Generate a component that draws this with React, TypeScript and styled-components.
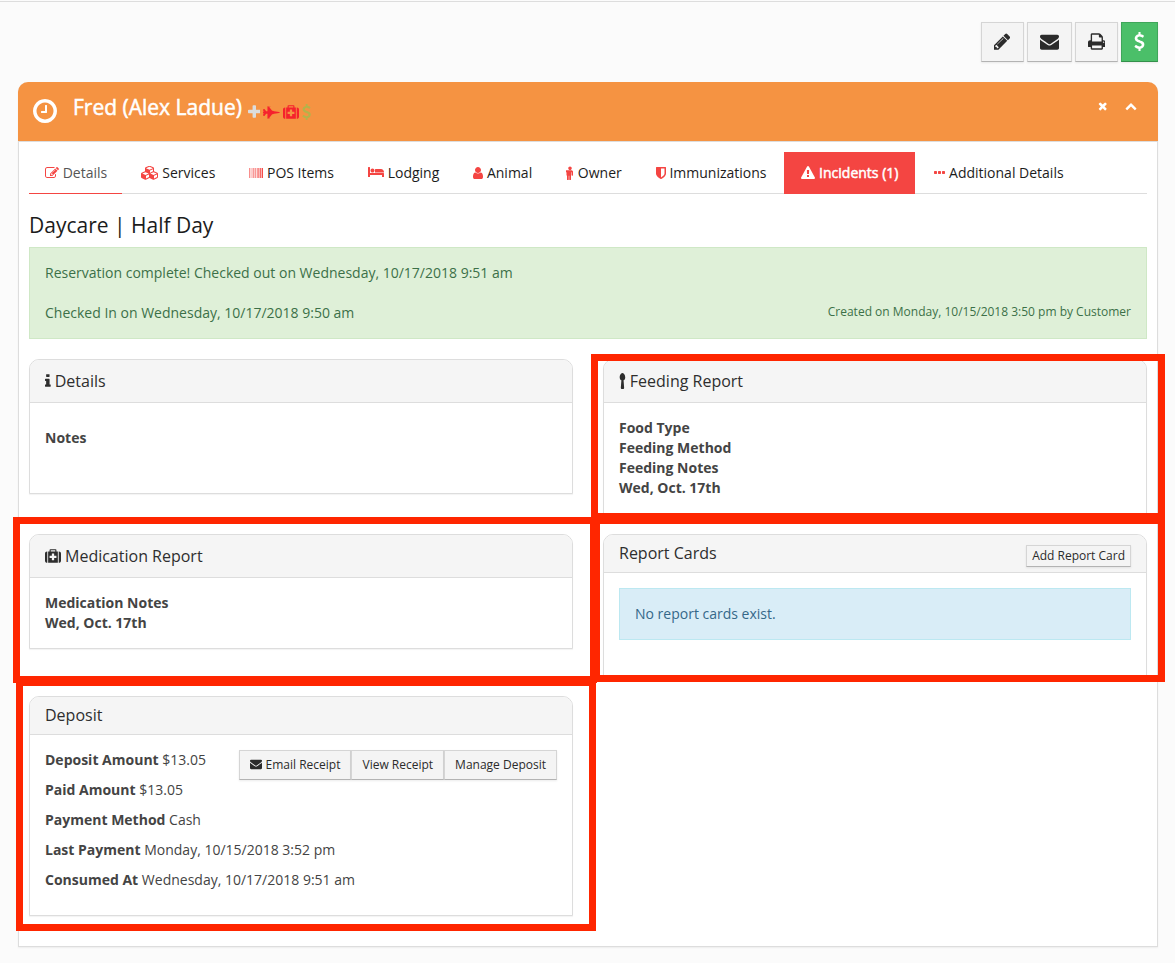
import React from "react";
import styled, { createGlobalStyle, css } from "styled-components";
import { FaFighterJet } from "react-icons/fa";

const GlobalStyle = createGlobalStyle`
  *, *::before, *::after { box-sizing: border-box; }
  body {
    margin: 0;
    background: #fbfbfb;
    color: #444;
    font: 14px/20px "Open Sans", "Noto Sans", sans-serif;
  }
  h1, h2, h3, p, ul, dl, dd { margin: 0; padding: 0; }
  button { font-family: inherit; cursor: pointer; }
`;

/* Each glyph: left edge and advance width in a 1792-unit em, then its outline. */
type Glyph = { x: number; w: number; d: string };

const glyphs = {
  pencil: { x: 128, w: 1536, d: "M491 1536l91-91-235-235-91 91v107h128v128h107zm523-928q0-22-22-22-10 0-17 7l-542 542q-7 7-7 17 0 22 22 22 10 0 17-7l542-542q7-7 7-17zm-54-192l416 416-832 832h-416v-416zm683 96q0 53-37 90l-166 166-416-416 166-165q36-38 90-38 53 0 91 38l235 234q37 39 37 91z" },
  envelope: { x: 0, w: 1792, d: "M1792 710v794q0 66-47 113t-113 47h-1472q-66 0-113-47t-47-113v-794q44 49 101 87 362 246 497 345 57 42 92.5 65.5t94.5 48 110 24.5h2q51 0 110-24.5t94.5-48 92.5-65.5q170-123 498-345 57-39 100-87zm0-294q0 79-49 151t-122 123q-376 261-468 325-10 7-42.5 31t-54 38.5-52 32.5-57.5 27-50 9h-2q-23 0-50-9t-57.5-27-52-32.5-54-38.5-42.5-31q-91-64-262-182.5t-205-142.5q-62-42-117-115.5t-55-136.5q0-78 41.5-130t118.5-52h1472q65 0 112.5 47t47.5 113z" },
  print: { x: 64, w: 1664, d: "M448 1536h896v-256h-896v256zm0-640h896v-384h-160q-40 0-68-28t-28-68v-160h-640v640zm1152 64q0-26-19-45t-45-19-45 19-19 45 19 45 45 19 45-19 19-45zm128 0v416q0 13-9.5 22.5t-22.5 9.5h-224v160q0 40-28 68t-68 28h-960q-40 0-68-28t-28-68v-160h-224q-13 0-22.5-9.5t-9.5-22.5v-416q0-79 56.5-135.5t135.5-56.5h64v-544q0-40 28-68t68-28h672q40 0 88 20t76 48l152 152q28 28 48 76t20 88v256h64q79 0 135.5 56.5t56.5 135.5z" },
  dollar: { x: 384, w: 1024, d: "M1362 1185q0 153-99.5 263.5t-258.5 136.5v175q0 14-9 23t-23 9h-135q-13 0-22.5-9.5t-9.5-22.5v-175q-66-9-127.5-31t-101.5-44.5-74-48-46.5-37.5-17.5-18q-17-21-2-41l103-135q7-10 23-12 15-2 24 9l2 2q113 99 243 125 37 8 74 8 81 0 142.5-43t61.5-122q0-28-15-53t-33.5-42-58.5-37.5-66-32-80-32.5q-39-16-61.5-25t-61.5-26.5-62.5-31-56.5-35.5-53.5-42.5-43.5-49-35.5-58-21-66.5-8.5-78q0-138 98-242t255-134v-180q0-13 9.5-22.5t22.5-9.5h135q14 0 23 9t9 23v176q57 6 110.5 23t87 33.5 63.5 37.5 39 29 15 14q17 18 5 38l-81 146q-8 15-23 16-14 3-27-7-3-3-14.5-12t-39-26.5-58.5-32-74.5-26-85.5-11.5q-95 0-155 43t-60 111q0 26 8.5 48t29.5 41.5 39.5 33 56 31 60.5 27 70 27.5q53 20 81 31.5t76 35 75.5 42.5 62 50 53 63.5 31.5 76.5 13 94z" },
  close: { x: 192, w: 1408, d: "M1490 1322q0 40-28 68l-136 136q-28 28-68 28t-68-28l-294-294-294 294q-28 28-68 28t-68-28l-136-136q-28-28-28-68t28-68l294-294-294-294q-28-28-28-68t28-68l136-136q28-28 68-28t68 28l294 294 294-294q28-28 68-28t68 28l136 136q28 28 28 68t-28 68l-294 294 294 294q28 28 28 68z" },
  chevronUp: { x: 0, w: 1792, d: "M1683 1331l-166 165q-19 19-45 19t-45-19l-531-531-531 531q-19 19-45 19t-45-19l-166-165q-19-19-19-45.5t19-45.5l742-741q19-19 45-19t45 19l742 741q19 19 19 45.5t-19 45.5z" },
  clock: { x: 128, w: 1536, d: "M1024 544v448q0 14-9 23t-23 9h-320q-14 0-23-9t-9-23v-64q0-14 9-23t23-9h224v-352q0-14 9-23t23-9h64q14 0 23 9t9 23zm416 352q0-148-73-273t-198-198-273-73-273 73-198 198-73 273 73 273 198 198 273 73 273-73 198-198 73-273zm224 0q0 209-103 385.5t-279.5 279.5-385.5 103-385.5-103-279.5-279.5-103-385.5 103-385.5 279.5-279.5 385.5-103 385.5 103 279.5 279.5 103 385.5z" },
  plus: { x: 192, w: 1408, d: "M1600 736v192q0 40-28 68t-68 28h-416v416q0 40-28 68t-68 28h-192q-40 0-68-28t-28-68v-416h-416q-40 0-68-28t-28-68v-192q0-40 28-68t68-28h416v-416q0-40 28-68t68-28h192q40 0 68 28t28 68v416h416q40 0 68 28t28 68z" },
  medkit: { x: 0, w: 1792, d: "M1280 1088v-192q0-14-9-23t-23-9h-224v-224q0-14-9-23t-23-9h-192q-14 0-23 9t-9 23v224h-224q-14 0-23 9t-9 23v192q0 14 9 23t23 9h224v224q0 14 9 23t23 9h192q14 0 23-9t9-23v-224h224q14 0 23-9t9-23zm-640-704h512v-128h-512v128zm-384 0v1280h-32q-92 0-158-66t-66-158v-832q0-92 66-158t158-66h32zm1184 0v1280h-1088v-1280h160v-160q0-40 28-68t68-28h576q40 0 68 28t28 68v160h160zm352 224v832q0 92-66 158t-158 66h-32v-1280h32q92 0 158 66t66 158z" },
  edit: { x: 0, w: 1792, d: "M888 1184l116-116-152-152-116 116v56h96v96h56zm440-720q-16-16-33 1l-350 350q-17 17-1 33t33-1l350-350q17-17 1-33zm80 594v190q0 119-84.5 203.5t-203.5 84.5h-832q-119 0-203.5-84.5t-84.5-203.5v-832q0-119 84.5-203.5t203.5-84.5h832q63 0 117 25 15 7 18 23 3 17-9 29l-49 49q-14 14-32 8-23-6-45-6h-832q-66 0-113 47t-47 113v832q0 66 47 113t113 47h832q66 0 113-47t47-113v-126q0-13 9-22l64-64q15-15 35-7t20 29zm-96-738l288 288-672 672h-288v-288zm444 132l-92 92-288-288 92-92q28-28 68-28t68 28l152 152q28 28 28 68t-28 68z" },
  cubes: { x: -128, w: 2240, d: "M512 1599l384-192v-314l-384 164v342zm-64-454l404-173-404-173-404 173zm1088 454l384-192v-314l-384 164v342zm-64-454l404-173-404-173-404 173zm-448-293l384-165v-266l-384 164v267zm-64-379l441-189-441-189-441 189zm1088 518v416q0 36-19 67t-52 47l-448 224q-25 14-57 14t-57-14l-448-224q-5-2-7-4-2 2-7 4l-448 224q-25 14-57 14t-57-14l-448-224q-33-16-52-47t-19-67v-416q0-38 21.5-70t56.5-48l434-186v-400q0-38 21.5-70t56.5-48l448-192q23-10 50-10t50 10l448 192q35 16 56.5 48t21.5 70v400l434 186q36 16 57 48t21 70z" },
  barcode: { x: 0, w: 1792, d: "M0 256h70v1280h-70zM120 256h36v1280h-36zM256 256h36v1280h-36zM400 256h36v1280h-36zM560 256h70v1280h-70zM700 256h36v1280h-36zM780 256h36v1280h-36zM860 256h36v1280h-36zM1000 256h70v1280h-70zM1130 256h70v1280h-70zM1250 256h70v1280h-70zM1400 256h110v1280h-110zM1560 256h50v1280h-50zM1670 256h122v1280h-122z" },
  bed: { x: 0, w: 2048, d: "M256 896h1728q26 0 45 19t19 45v448h-256v-256h-1536v256h-256v-1216q0-26 19-45t45-19h128q26 0 45 19t19 45v704zm576-320q0-106-75-181t-181-75-181 75-75 181 75 181 181 75 181-75 75-181zm1216 256v-64q0-159-112.5-271.5t-271.5-112.5h-704q-26 0-45 19t-19 45v384h1152z" },
  user: { x: 256, w: 1280, d: "M1536 1399q0 109-62.5 187t-150.5 78h-854q-88 0-150.5-78t-62.5-187q0-85 8.5-160.5t31.5-152 58.5-131 94-89 134.5-34.5q131 128 313 128t313-128q76 0 134.5 34.5t94 89 58.5 131 31.5 152 8.5 160.5zm-256-887q0 159-112.5 271.5t-271.5 112.5-271.5-112.5-112.5-271.5 112.5-271.5 271.5-112.5 271.5 112.5 112.5 271.5z" },
  male: { x: 384, w: 1024, d: "M1280 736v416q0 40-28 68t-68 28-68-28-28-68v-352h-64v912q0 46-33 79t-79 33-79-33-33-79v-464h-64v464q0 46-33 79t-79 33-79-33-33-79v-912h-64v352q0 40-28 68t-68 28-68-28-28-68v-416q0-80 56-136t136-56h640q80 0 136 56t56 136zm-160-448q0 93-65.5 158.5t-158.5 65.5-158.5-65.5-65.5-158.5 65.5-158.5 158.5-65.5 158.5 65.5 65.5 158.5z" },
  shield: { x: 256, w: 1280, d: "M1344 960v-640h-448v1137q119-63 213-137 235-184 235-360zm192-768v768q0 86-33.5 170.5t-83 150-118 127.5-126.5 103-121 77.5-89.5 49.5-42.5 20q-12 6-26 6t-26-6q-16-7-42.5-20t-89.5-49.5-121-77.5-126.5-103-118-127.5-83-150-33.5-170.5v-768q0-26 19-45t45-19h1152q26 0 45 19t19 45z" },
  warning: { x: 0, w: 1792, d: "M1024 1375v-190q0-14-9.5-23.5t-22.5-9.5h-192q-13 0-22.5 9.5t-9.5 23.5v190q0 14 9.5 23.5t22.5 9.5h192q13 0 22.5-9.5t9.5-23.5zm-2-374l18-459q0-12-10-19-13-11-24-11h-220q-11 0-24 11-10 7-10 21l17 457q0 10 10 16.5t24 6.5h185q14 0 23.5-6.5t10.5-16.5zm-14-934l768 1408q35 63-2 126-17 29-46.5 46t-63.5 17h-1536q-34 0-63.5-17t-46.5-46q-37-63-2-126l768-1408q17-31 47-49t65-18 65 18 47 49z" },
  ellipsis: { x: 192, w: 1408, d: "M576 736v192q0 40-28 68t-68 28h-192q-40 0-68-28t-28-68v-192q0-40 28-68t68-28h192q40 0 68 28t28 68zm512 0v192q0 40-28 68t-68 28h-192q-40 0-68-28t-28-68v-192q0-40 28-68t68-28h192q40 0 68 28t28 68zm512 0v192q0 40-28 68t-68 28h-192q-40 0-68-28t-28-68v-192q0-40 28-68t68-28h192q40 0 68 28t28 68z" },
  info: { x: 576, w: 640, d: "M1216 1344v128q0 26-19 45t-45 19h-512q-26 0-45-19t-19-45v-128q0-26 19-45t45-19h64v-384h-64q-26 0-45-19t-19-45v-128q0-26 19-45t45-19h384q26 0 45 19t19 45v576h64q26 0 45 19t19 45zm-128-1152v192q0 26-19 45t-45 19h-256q-26 0-45-19t-19-45v-192q0-26 19-45t45-19h256q26 0 45 19t19 45z" },
  spoon: { x: 512, w: 768, d: "M1216 480q0 120-51 207t-141 111l64 866q2 52-34 90t-88 38h-128q-52 0-88-38t-34-90l64-866q-90-24-141-111t-51-207q0-110 38-218t110-183 160-75 160 75 110 183 38 218z" },
} satisfies Record<string, Glyph>;

type GlyphName = keyof typeof glyphs;

const Svg = styled.svg`
  flex: none;
  display: block;
  fill: currentColor;
`;

function Icon({ name, size = 14 }: { name: GlyphName; size?: number }) {
  const g = glyphs[name];
  return (
    <Svg
      viewBox={`${g.x} 0 ${g.w} 1792`}
      width={(g.w / 1792) * size}
      height={size}
      aria-hidden="true"
    >
      <path d={g.d} />
    </Svg>
  );
}

const Page = styled.main`
  border-top: 1px solid #ddd;
  margin-top: 1px;
  padding: 20px 17px 16px 18px;
`;

const Toolbar = styled.div`
  display: flex;
  justify-content: flex-end;
  gap: 3px;
  margin-bottom: 20px;
`;

const buttonLook = css`
  display: flex;
  align-items: center;
  gap: 4px;
  background: #f4f4f4;
  border: 1px solid #d5d5d5;
  border-bottom-color: #b3b3b3;
  box-shadow: 0 1px 2px rgba(0, 0, 0, 0.08);
  color: #2b2b2b;
`;

const ToolButton = styled.button<{ $primary?: boolean }>`
  ${buttonLook}
  height: 40px;
  padding: 0 12px 1px;
  ${(p) =>
    p.$primary &&
    css`
      background: #4bbf69;
      border-color: #3fa65a;
      border-bottom-color: #34904b;
      color: #fff;
    `}
`;

const SmallButton = styled.button<{ $compact?: boolean }>`
  ${buttonLook}
  height: ${(p) => (p.$compact ? 22 : 30)}px;
  padding: 0 ${(p) => (p.$compact ? 5 : 10)}px 2px;
  font-size: 12px;
  white-space: nowrap;
`;

const Panel = styled.section`
  background: #fff;
  border: 1px solid #ddd;
  border-top: 0;
  border-radius: 10px 10px 0 0;
  box-shadow: 0 1px 2px rgba(0, 0, 0, 0.06);
`;

const PanelHeader = styled.header`
  display: flex;
  align-items: flex-start;
  height: 59px;
  margin: 0 -1px;
  padding: 10px 21px 0 15px;
  border-radius: 10px 10px 0 0;
  background: #f59342;
  color: #fff;
`;

const ClockBox = styled.span`
  width: 40px;
  padding-top: 5px;
`;

const Title = styled.h1`
  font-size: 21px;
  line-height: 30px;
  font-weight: 400;
  -webkit-text-stroke: 0.5px #fff;
`;

const Flags = styled.span`
  display: flex;
  gap: 3px;
  margin-left: 6px;
  padding-top: 12px;
`;

const Flag = styled.span<{ $color: string }>`
  color: ${(p) => p.$color};
`;

const PanelTools = styled.div`
  display: flex;
  gap: 18px;
  margin-left: auto;
  padding-top: 8px;
`;

const PlainButton = styled.button`
  border: 0;
  padding: 0;
  background: none;
  color: #fff;
`;

const PanelBody = styled.div`
  border-top: 1px solid #ddd;
  padding: 10px 10px 30px;
`;

const Tabs = styled.nav`
  display: flex;
  gap: 3px;
  border-bottom: 1px solid #ddd;
`;

const Tab = styled.a<{ $active?: boolean; $alert?: boolean }>`
  height: 42px;
  margin-bottom: -1px;
  padding: 0 15px 0 16px;
  border-bottom: 1px solid ${(p) => (p.$active ? "#f44542" : "transparent")};
  color: ${(p) => (p.$active ? "#555" : "#1c1c1c")};
  line-height: 42px;
  text-decoration: none;
  white-space: nowrap;

  svg {
    display: inline-block;
    vertical-align: -2px;
    color: #f44542;
  }

  ${(p) =>
    p.$alert &&
    css`
      padding: 0 17px;
      background: #f44542;
      color: #fff;
      -webkit-text-stroke: 0.5px #fff;
      svg { color: #fff; }
    `}
`;

const Heading = styled.h2`
  margin: 16px 0 7px;
  color: #1c1c1c;
  font-size: 21px;
  line-height: 30px;
  font-weight: 400;
`;

const Alert = styled.div<{ $tone: "success" | "info" }>`
  padding: 15px;
  border: 1px solid;
  ${(p) =>
    p.$tone === "success"
      ? css`
          background: #dff0d8;
          border-color: #cfe8c6;
          color: #3c7048;
        `
      : css`
          background: #d9edf7;
          border-color: #bce8f1;
          color: #356889;
        `}
`;

const AlertRow = styled.div`
  display: flex;
  justify-content: space-between;
  margin-top: 20px;
`;

const Small = styled.span`
  font-size: 12px;
  line-height: 18px;
`;

const Cards = styled.div`
  display: grid;
  grid-template-columns: repeat(2, minmax(0, 1fr));
  gap: 20px 30px;
  align-items: start;
  margin-top: 20px;
`;

const CardBox = styled.section`
  position: relative;
  background: #fff;
  border: 1px solid #ddd;
  border-radius: 10px 10px 0 0;
  box-shadow: 0 1px 1px rgba(0, 0, 0, 0.05);
`;

const CardHeader = styled.header<{ $tall?: boolean }>`
  display: flex;
  justify-content: space-between;
  align-items: flex-start;
  height: ${(p) => (p.$tall ? 43 : 38)}px;
  padding: 10px 15px 0;
  border-bottom: 1px solid #ddd;
  border-radius: 9px 9px 0 0;
  background: #f5f5f5;
`;

const CardTitle = styled.h3<{ $tall?: boolean }>`
  display: flex;
  align-items: center;
  gap: 4px;
  color: #2e2e2e;
  font-size: 16px;
  line-height: ${(p) => (p.$tall ? 22 : 17)}px;
  font-weight: 400;
`;

const CardBody = styled.div`
  padding: 15px;
`;

const LabelLine = styled.p<{ $spaced?: boolean }>`
  margin: ${(p) => (p.$spaced ? "10px 0 30px" : "0")};
  font-weight: 700;
`;

/* Thick marker frame laid over a card, reaching past its edges. */
const Marker = styled.span<{ $reach: string }>`
  position: absolute;
  z-index: 1;
  inset: ${(p) => p.$reach};
  border: 7px solid #ff2600;
  pointer-events: none;
`;

const NoCards = styled(Alert)`
  margin-bottom: 20px;
`;

const Fact = styled.div`
  margin-bottom: 10px;
  dt { display: inline; font-weight: 700; }
  dd { display: inline; }
`;

const ButtonGroup = styled.div`
  display: flex;
  float: right;
`;

type CardProps = {
  title: string;
  icon?: GlyphName;
  action?: React.ReactNode;
  reach?: string;
  children: React.ReactNode;
};

function Card({ title, icon, action, reach, children }: CardProps) {
  return (
    <CardBox>
      <CardHeader $tall={!!icon}>
        <CardTitle $tall={!!icon}>
          {icon && <Icon name={icon} size={16} />}
          {title}
        </CardTitle>
        {action}
      </CardHeader>
      {children}
      {reach && <Marker $reach={reach} />}
    </CardBox>
  );
}

const tabs: { label: string; icon: GlyphName; active?: boolean; alert?: boolean }[] = [
  { label: "Details", icon: "edit", active: true },
  { label: "Services", icon: "cubes" },
  { label: "POS Items", icon: "barcode" },
  { label: "Lodging", icon: "bed" },
  { label: "Animal", icon: "user" },
  { label: "Owner", icon: "male" },
  { label: "Immunizations", icon: "shield" },
  { label: "Incidents (1)", icon: "warning", alert: true },
  { label: "Additional Details", icon: "ellipsis" },
];

const facts = [
  ["Deposit Amount", "$13.05"],
  ["Paid Amount", "$13.05"],
  ["Payment Method", "Cash"],
  ["Last Payment", "Monday, 10/15/2018 3:52 pm"],
  ["Consumed At", "Wednesday, 10/17/2018 9:51 am"],
];

export default function App() {
  return (
    <>
      <GlobalStyle />
      <Page>
        <Toolbar>
          <ToolButton aria-label="Edit"><Icon name="pencil" size={19} /></ToolButton>
          <ToolButton aria-label="Email"><Icon name="envelope" size={19} /></ToolButton>
          <ToolButton aria-label="Print"><Icon name="print" size={19} /></ToolButton>
          <ToolButton aria-label="Payment" $primary><Icon name="dollar" size={19} /></ToolButton>
        </Toolbar>

        <Panel>
          <PanelHeader>
            <ClockBox><Icon name="clock" size={28} /></ClockBox>
            <Title>Fred (Alex Ladue)</Title>
            <Flags>
              <Flag $color="#dcdcdc"><Icon name="plus" size={16} /></Flag>
              <Flag $color="#f5222d"><FaFighterJet size={17} /></Flag>
              <Flag $color="#f5222d"><Icon name="medkit" size={16} /></Flag>
              <Flag $color="#b3b34a"><Icon name="dollar" size={16} /></Flag>
            </Flags>
            <PanelTools>
              <PlainButton aria-label="Close"><Icon name="close" size={12} /></PlainButton>
              <PlainButton aria-label="Collapse"><Icon name="chevronUp" size={12} /></PlainButton>
            </PanelTools>
          </PanelHeader>

          <PanelBody>
            <Tabs>
              {tabs.map((t) => (
                <Tab key={t.label} href="#" $active={t.active} $alert={t.alert}>
                  <Icon name={t.icon} /> {t.label}
                </Tab>
              ))}
            </Tabs>

            <Heading>Daycare | Half Day</Heading>

            <Alert $tone="success">
              <p>Reservation complete! Checked out on Wednesday, 10/17/2018 9:51 am</p>
              <AlertRow>
                <span>Checked In on Wednesday, 10/17/2018 9:50 am</span>
                <Small>Created on Monday, 10/15/2018 3:50 pm by Customer</Small>
              </AlertRow>
            </Alert>

            <Cards>
              <Card title="Details" icon="info">
                <CardBody>
                  <LabelLine $spaced>Notes</LabelLine>
                </CardBody>
              </Card>

              <Card title="Feeding Report" icon="spoon" reach="-6px -19px -7px -13px">
                <CardBody>
                  <LabelLine>Food Type</LabelLine>
                  <LabelLine>Feeding Method</LabelLine>
                  <LabelLine>Feeding Notes</LabelLine>
                  <LabelLine>Wed, Oct. 17th</LabelLine>
                </CardBody>
              </Card>

              <Card title="Medication Report" icon="medkit" reach="-18px -25px -35px -17px">
                <CardBody>
                  <LabelLine>Medication Notes</LabelLine>
                  <LabelLine>Wed, Oct. 17th</LabelLine>
                </CardBody>
              </Card>

              <Card
                title="Report Cards"
                action={<SmallButton $compact>Add Report Card</SmallButton>}
                reach="-18px -19px -7px -11px"
              >
                <CardBody>
                  <NoCards $tone="info">No report cards exist.</NoCards>
                </CardBody>
              </Card>

              <Card title="Deposit" reach="-18px -24px -16px -14px">
                <CardBody>
                  <ButtonGroup>
                    <SmallButton><Icon name="envelope" size={12} />Email Receipt</SmallButton>
                    <SmallButton>View Receipt</SmallButton>
                    <SmallButton>Manage Deposit</SmallButton>
                  </ButtonGroup>
                  <dl>
                    {facts.map(([label, value]) => (
                      <Fact key={label}>
                        <dt>{label}</dt> <dd>{value}</dd>
                      </Fact>
                    ))}
                  </dl>
                </CardBody>
              </Card>
            </Cards>
          </PanelBody>
        </Panel>
      </Page>
    </>
  );
}
